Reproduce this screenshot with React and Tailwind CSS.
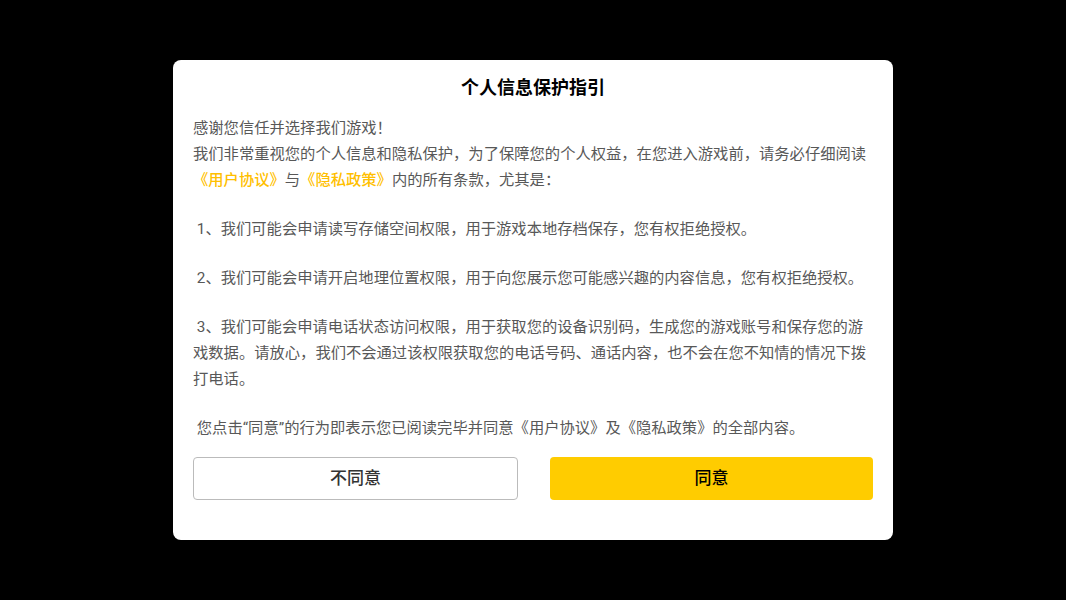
export default function App() {
  const font = { fontFamily: 'Roboto, "Noto Sans CJK SC", sans-serif' };
  return (
    <div className="flex h-screen w-full items-center justify-center bg-black" style={font}>
      <div className="flex h-[480px] w-[720px] flex-col rounded-lg bg-white px-5 pt-[15px]">
        <h1 className="text-center text-[18px] font-bold leading-[26px] text-black">个人信息保护指引</h1>

        <div className="mt-[14px] text-[15.3px] leading-[26px] text-[#585858]">
          <p>感谢您信任并选择我们游戏！</p>
          <p>
            我们非常重视您的个人信息和隐私保护，为了保障您的个人权益，在您进入游戏前，请务必仔细阅读
            <span className="font-medium text-[#ffbf00]">《用户协议》</span>与<span className="font-medium text-[#ffbf00]">《隐私政策》</span>内的所有条款，尤其是：
          </p>
          <p className="mt-[23px]">&nbsp;1、我们可能会申请读写存储空间权限，用于游戏本地存档保存，您有权拒绝授权。</p>
          <p className="mt-[23px]">&nbsp;2、我们可能会申请开启地理位置权限，用于向您展示您可能感兴趣的内容信息，您有权拒绝授权。</p>
          <p className="mt-[23px]">
            &nbsp;3、我们可能会申请电话状态访问权限，用于获取您的设备识别码，生成您的游戏账号和保存您的游戏数据。请放心，我们不会通过该权限获取您的电话号码、通话内容，也不会在您不知情的情况下拨打电话。
          </p>
          <p className="mt-[23px]">&nbsp;您点击“同意”的行为即表示您已阅读完毕并同意《用户协议》及《隐私政策》的全部内容。</p>
        </div>

        <div className="mt-4 flex gap-8">
          <button className="h-[43px] flex-1 rounded border border-[#bbbbbb] bg-white text-[17px] font-medium text-[#333333]">不同意</button>
          <button className="h-[43px] flex-1 rounded bg-[#ffcc00] text-[17px] font-medium text-black">同意</button>
        </div>
      </div>
    </div>
  );
}
